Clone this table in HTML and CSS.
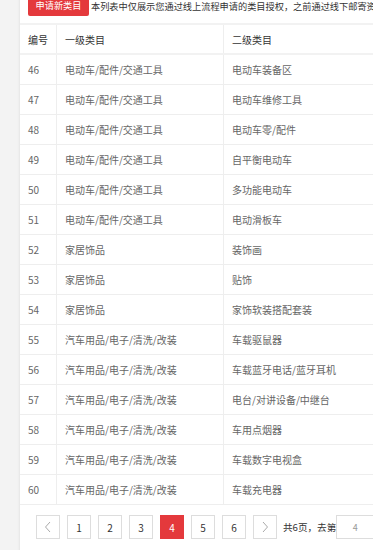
FILE: index.html
```html
<!DOCTYPE html>
<html lang="zh-CN">
<head>
<meta charset="utf-8">
<title>类目授权</title>
<link rel="stylesheet" href="styles.css">
</head>
<body>
<div class="panel">
  <div class="topbar">
    <button class="btn-apply">申请新类目</button>
    <span class="notice">本列表中仅展示您通过线上流程申请的类目授权，之前通过线下邮寄资质申请的类目请联系</span>
  </div>
  <table class="grid">
    <thead>
      <tr><th class="c1">编号</th><th class="c2">一级类目</th><th class="c3">二级类目</th><th class="c4">三级类目</th></tr>
    </thead>
    <tbody>
      <tr><td>46</td><td>电动车/配件/交通工具</td><td>电动车装备区</td><td></td></tr>
      <tr><td>47</td><td>电动车/配件/交通工具</td><td>电动车维修工具</td><td></td></tr>
      <tr><td>48</td><td>电动车/配件/交通工具</td><td>电动车零/配件</td><td></td></tr>
      <tr><td>49</td><td>电动车/配件/交通工具</td><td>自平衡电动车</td><td></td></tr>
      <tr><td>50</td><td>电动车/配件/交通工具</td><td>多功能电动车</td><td></td></tr>
      <tr><td>51</td><td>电动车/配件/交通工具</td><td>电动滑板车</td><td></td></tr>
      <tr><td>52</td><td>家居饰品</td><td>装饰画</td><td></td></tr>
      <tr><td>53</td><td>家居饰品</td><td>贴饰</td><td></td></tr>
      <tr><td>54</td><td>家居饰品</td><td>家饰软装搭配套装</td><td></td></tr>
      <tr><td>55</td><td>汽车用品/电子/清洗/改装</td><td>车载驱鼠器</td><td></td></tr>
      <tr><td>56</td><td>汽车用品/电子/清洗/改装</td><td>车载蓝牙电话/蓝牙耳机</td><td></td></tr>
      <tr><td>57</td><td>汽车用品/电子/清洗/改装</td><td>电台/对讲设备/中继台</td><td></td></tr>
      <tr><td>58</td><td>汽车用品/电子/清洗/改装</td><td>车用点烟器</td><td></td></tr>
      <tr><td>59</td><td>汽车用品/电子/清洗/改装</td><td>车载数字电视盒</td><td></td></tr>
      <tr><td>60</td><td>汽车用品/电子/清洗/改装</td><td>车载充电器</td><td></td></tr>
    </tbody>
  </table>
  <div class="pager">
    <a class="pg arrow"><svg width="8" height="12" viewBox="0 0 8 12"><polyline points="6,1 1.5,6 6,11" fill="none" stroke="#aaa" stroke-width="1"/></svg></a>
    <a class="pg">1</a>
    <a class="pg">2</a>
    <a class="pg">3</a>
    <a class="pg active">4</a>
    <a class="pg">5</a>
    <a class="pg">6</a>
    <a class="pg arrow"><svg width="8" height="12" viewBox="0 0 8 12"><polyline points="2,1 6.5,6 2,11" fill="none" stroke="#aaa" stroke-width="1"/></svg></a>
    <span class="total">共6页，去第</span>
    <input class="goto" type="text" value="4">
  </div>
</div>
</body>
</html>
```

FILE: styles.css
```css
html, body {
  margin: 0;
  padding: 0;
  overflow: hidden;
}
body {
  background: #f3f3f3;
  font-family: "Noto Sans CJK SC", "Noto Sans", sans-serif;
  height: 550px;
}
.panel {
  margin-left: 20px;
  width: 640px;
  height: 560px;
  background: #fff;
  box-shadow: -1px 0 2px rgba(0,0,0,0.06);
}
.topbar {
  display: flex;
  align-items: center;
  height: 21px;
  margin-top: -5px;
  padding-left: 8px;
  margin-bottom: 7px;
}
.btn-apply {
  background: #e4393c;
  color: #fff;
  border: none;
  border-radius: 2px;
  height: 21px;
  width: 61px;
  padding: 0;
  font-family: inherit;
  font-size: 9.2px;
  line-height: 21px;
}
.notice {
  margin-left: 2px;
  font-size: 9.2px;
  color: #333;
  white-space: nowrap;
}
.grid {
  border-collapse: collapse;
  width: 620px;
  table-layout: fixed;
  border-top: 2px solid #f2f2f2;
}
.grid th, .grid td {
  height: 29px;
  padding: 0 8px;
  text-align: left;
  font-size: 10px;
  white-space: nowrap;
  border-right: 1px solid #eee;
  border-bottom: 1px solid #eee;
  vertical-align: middle;
}
.grid th {
  font-weight: normal;
  color: #333;
  height: 28px;
  border-bottom: 2px solid #f2f2f2;
}
.grid td {
  color: #666;
}
.c1 { width: 20px; }
.c2 { width: 150px; }
.c3 { width: 200px; }
.c4 { width: 200px; }
.pager {
  display: flex;
  align-items: center;
  gap: 7px;
  margin-top: 10px;
  padding-left: 16px;
}
.pg {
  box-sizing: border-box;
  width: 24px;
  height: 24px;
  border: 1px solid #ddd;
  background: #fff;
  color: #333;
  font-size: 10px;
  display: flex;
  align-items: center;
  justify-content: center;
}
.pg.active {
  background: #e4393c;
  border-color: #e4393c;
  color: #fff;
}
.total {
  font-size: 9.6px;
  color: #333;
  margin-left: -1px;
}
.goto {
  box-sizing: border-box;
  width: 38px;
  height: 24px;
  margin-left: -7px;
  border: 1px solid #ddd;
  padding: 0;
  text-align: center;
  font-family: inherit;
  font-size: 9px;
  color: #999;
  outline: none;
}
```
